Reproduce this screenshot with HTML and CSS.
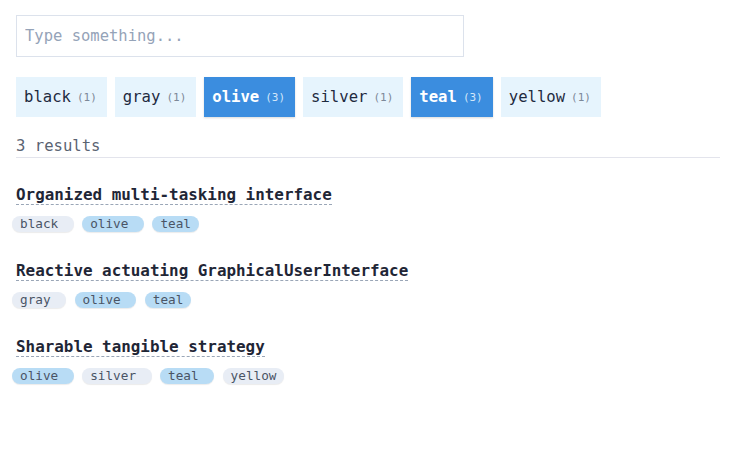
FILE: index.html
```html
<!DOCTYPE html>
<html lang="en">
<head>
<meta charset="utf-8">
<title>Filter</title>
<link rel="stylesheet" href="styles.css">
</head>
<body>
<div class="page">
  <input class="search" type="text" placeholder="Type something...">
  <div class="filters">
    <button class="filter">black<span class="count">(1)</span></button>
    <button class="filter">gray<span class="count">(1)</span></button>
    <button class="filter active">olive<span class="count">(3)</span></button>
    <button class="filter">silver<span class="count">(1)</span></button>
    <button class="filter active">teal<span class="count">(3)</span></button>
    <button class="filter">yellow<span class="count">(1)</span></button>
  </div>
  <div class="results">3 results</div>
  <ul class="list">
    <li class="item">
      <a class="title">Organized multi-tasking interface</a>
      <div class="tags">
        <span class="tag">black</span>
        <span class="tag on">olive</span>
        <span class="tag on">teal</span>
      </div>
    </li>
    <li class="item">
      <a class="title">Reactive actuating GraphicalUserInterface</a>
      <div class="tags">
        <span class="tag">gray</span>
        <span class="tag on">olive</span>
        <span class="tag on">teal</span>
      </div>
    </li>
    <li class="item">
      <a class="title">Sharable tangible strategy</a>
      <div class="tags">
        <span class="tag on">olive</span>
        <span class="tag">silver</span>
        <span class="tag on">teal</span>
        <span class="tag">yellow</span>
      </div>
    </li>
  </ul>
</div>
</body>
</html>
```

FILE: styles.css
```css
* { box-sizing: border-box; }

body {
  margin: 0;
  background: #ffffff;
  font-family: "DejaVu Sans Mono", "Liberation Mono", monospace;
  color: #1f2636;
}

.page {
  width: 704px;
  padding: 15px 0 0 0;
  margin-left: 16px;
}

.search {
  display: block;
  width: 448px;
  height: 42px;
  margin: 0;
  padding: 0 8px;
  border: 1px solid #dce2ec;
  border-radius: 0;
  font-family: inherit;
  font-size: 15.5px;
  color: #1f2636;
  outline: none;
}

.search::placeholder {
  color: #95a3b8;
}

.filters {
  display: flex;
  gap: 8px;
  margin-top: 20px;
}

.filter {
  display: flex;
  align-items: center;
  flex: none;
  height: 40px;
  padding: 0 10px 0 8px;
  border: none;
  border-radius: 0;
  background: #e6f4fd;
  color: #1e2a3f;
  font-family: inherit;
  font-size: 15.6px;
  font-weight: 500;
  cursor: pointer;
}

.filter.active {
  background: #3b8ddf;
  color: #ffffff;
  font-weight: bold;
  box-shadow: 0 1px 2px rgba(0, 0, 0, 0.15);
}

.count {
  margin-left: 6px;
  font-size: 11px;
  font-weight: normal;
  color: #7d8898;
}

.filter.active .count {
  color: #d3e6f9;
}

.results {
  margin-top: 18px;
  line-height: 22px;
  font-size: 15.6px;
  color: #5a6372;
  border-bottom: 1px solid #e3e4ec;
}

.list {
  list-style: none;
  margin: 0;
  padding: 28px 0 0 0;
}

.item {
  display: flex;
  flex-direction: column;
  align-items: flex-start;
  margin-bottom: 30px;
}

.title {
  display: block;
  font-size: 15.9px;
  font-weight: bold;
  line-height: 18px;
  color: #1f2636;
  border-bottom: 1px dashed #9aa6b7;
  text-decoration: none;
}

.tags {
  display: flex;
  gap: 8.5px;
  margin-top: 11px;
  margin-left: -4px;
}

.tag {
  height: 16px;
  line-height: 16px;
  padding: 0 8px;
  border-radius: 8px;
  background: #e8edf5;
  color: #4a5465;
  font-size: 12.7px;
  box-shadow: 0 1px 1px rgba(0, 0, 0, 0.08);
}

.tag:not(:last-child) {
  padding-right: 15.5px;
}

.tag.on {
  background: #b8dcf5;
}
```
